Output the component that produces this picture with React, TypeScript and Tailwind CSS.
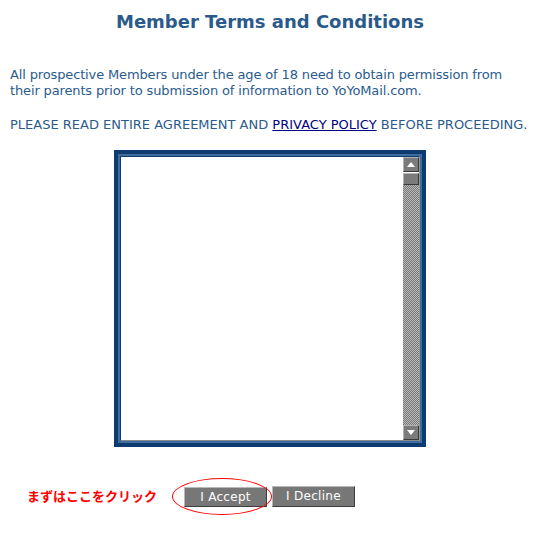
import React from 'react'

function ScrollButton({ dir }: { dir: 'up' | 'down' }) {
	return (
		<div className="w-[16px] h-[15px] bg-[#7b7b7b] border border-t-[#b4b4b4] border-l-[#b4b4b4] border-r-[#3a3a3a] border-b-[#3a3a3a] flex items-center justify-center">
			<svg width="8" height="5" viewBox="0 0 8 5">
				{dir === 'up' ? (
					<polygon points="4,0 8,5 0,5" fill="#ffffff" />
				) : (
					<polygon points="0,0 8,0 4,5" fill="#ffffff" />
				)}
			</svg>
		</div>
	)
}

function TermsBox() {
	return (
		<div className="ml-[114px] w-[312px] h-[297px] border-[4px] border-[#0d3b6f]">
			<div className="h-full border-[2px] border-[#3e6c9f]">
				<div className="h-full flex bg-white border border-t-[#0d3b6f] border-l-[#0d3b6f] border-r-[#9a9a9a] border-b-[#8a8a8a]">
					<div className="flex-1" />
					<div className="w-[16px] flex flex-col">
						<ScrollButton dir="up" />
						<div className="mt-[1px] w-[16px] h-[12px] bg-[#7b7b7b] border border-t-[#b4b4b4] border-l-[#b4b4b4] border-r-[#3a3a3a] border-b-[#3a3a3a]" />
						<div className="flex-1 bg-[repeating-conic-gradient(#7a7a7a_0%_25%,#b8b8b8_0%_50%)] bg-[length:2px_2px]" />
						<ScrollButton dir="down" />
					</div>
				</div>
			</div>
		</div>
	)
}

export default function App() {
	return (
		<div className="w-[537px] h-[538px] bg-white font-['DejaVu_Sans',Verdana,sans-serif] text-[#2b5b8c]">
			<h1 className="pt-[10px] pl-[3px] text-center text-[18px] font-bold leading-[24px] text-[#2a5a8b]">
				Member Terms and Conditions
			</h1>
			<div className="mt-[33px] px-[10px] text-[13px] leading-[16px] tracking-[-0.14px] whitespace-nowrap">
				<p>
					All prospective Members under the age of 18 need to obtain permission from
					<br />
					their parents prior to submission of information to YoYoMail.com.
				</p>
				<p className="mt-[18px] tracking-normal">
					PLEASE READ ENTIRE AGREEMENT AND{' '}
					<a href="#" className="text-[#000080] underline">
						PRIVACY POLICY
					</a>{' '}
					BEFORE PROCEEDING.
				</p>
			</div>
			<div className="mt-[17px]">
				<TermsBox />
			</div>
			<div className="mt-[37px] pl-[27px] flex items-center">
				<span className="w-[157px] text-[13px] font-bold text-[#ff0000] font-['Noto_Sans_CJK_JP',sans-serif] leading-[20px]">
					まずはここをクリック
				</span>
				<div className="relative">
					<button className="w-[83px] h-[20px] bg-[#777777] text-white text-[12px] leading-none tracking-[0.3px] border border-t-[#b8b8b8] border-l-[#b8b8b8] border-r-[#3c3c3c] border-b-[#3c3c3c]">
						I Accept
					</button>
					<div className="absolute left-[-12px] top-[-6px] w-[100px] h-[37px] rounded-[50%] border border-[#ff0000] pointer-events-none" />
				</div>
				<button className="ml-[5px] w-[83px] h-[21px] bg-[#777777] text-white text-[12px] leading-none tracking-[0.3px] border border-t-[#b8b8b8] border-l-[#b8b8b8] border-r-[#3c3c3c] border-b-[#3c3c3c]">
					I Decline
				</button>
			</div>
		</div>
	)
}
